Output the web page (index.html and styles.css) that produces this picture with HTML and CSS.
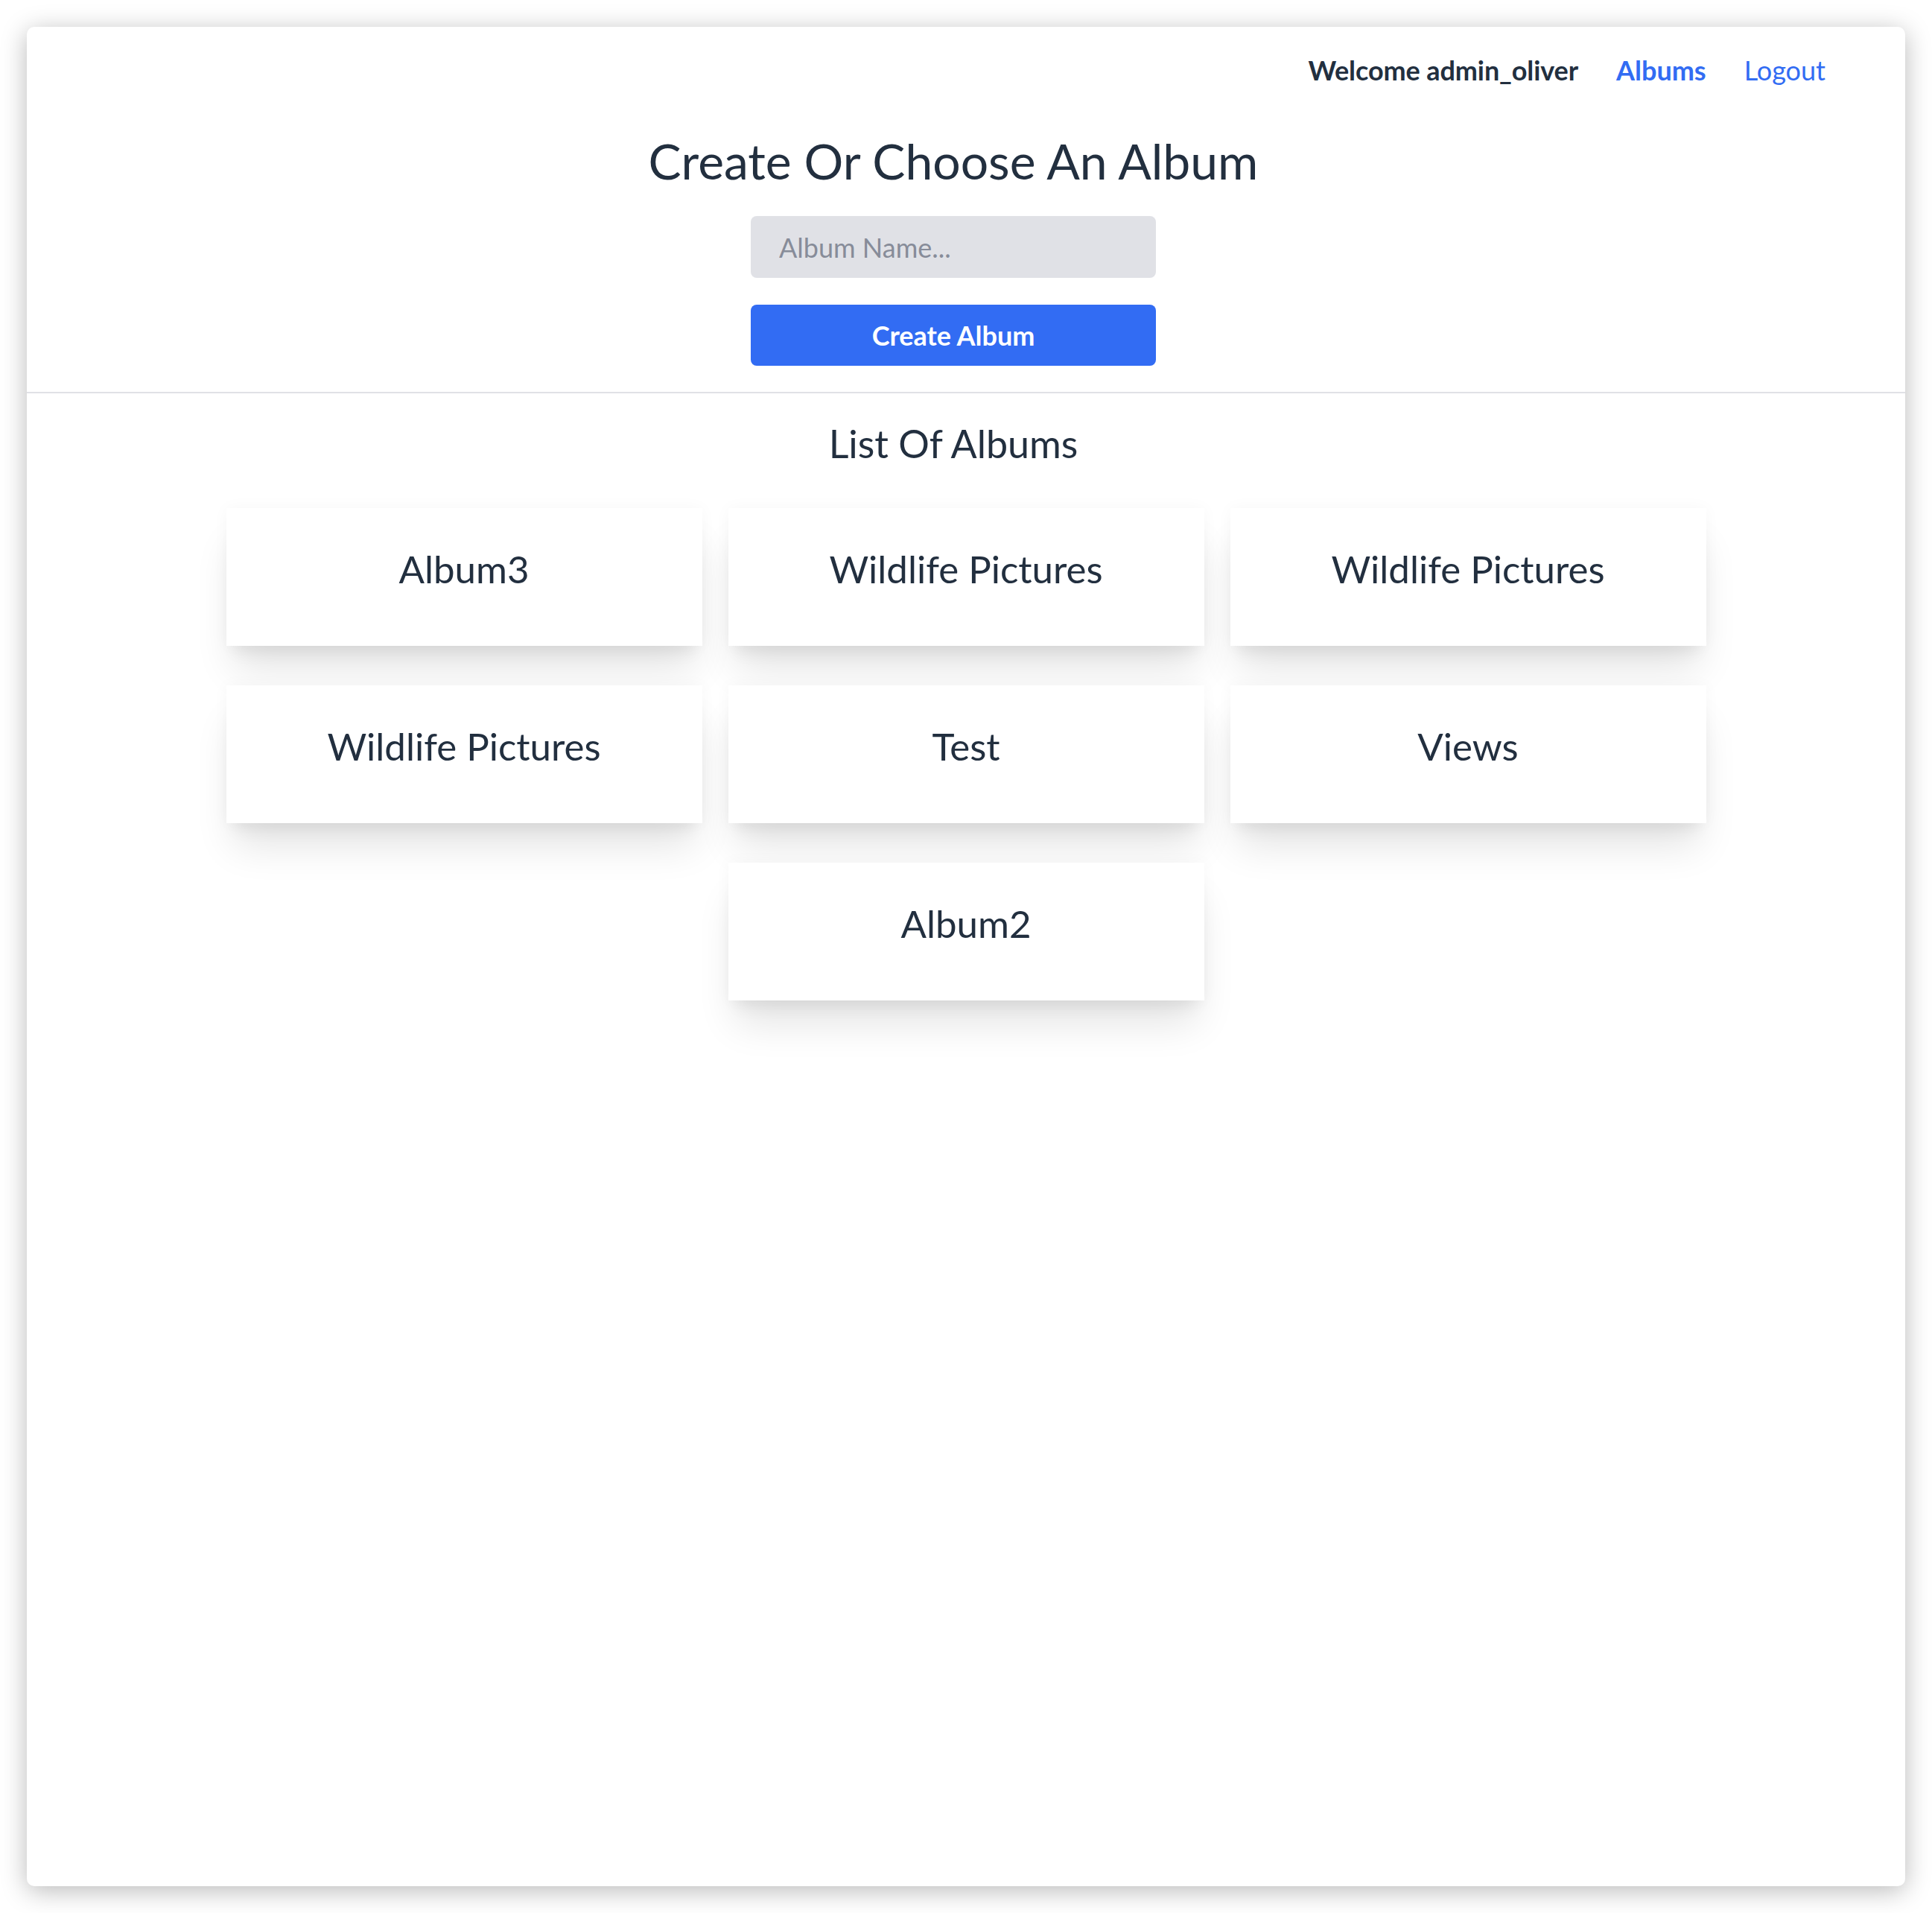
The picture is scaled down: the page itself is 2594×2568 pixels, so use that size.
FILE: index.html
```html
<!DOCTYPE html>
<html lang="en">
<head>
<meta charset="utf-8">
<title>Albums</title>
<link rel="stylesheet" href="styles.css">
</head>
<body>
<div class="window">
  <nav class="topnav">
    <span class="welcome">Welcome admin_oliver</span>
    <a class="nav-link nav-active" href="#">Albums</a>
    <a class="nav-link" href="#">Logout</a>
  </nav>
  <section class="create">
    <h1 class="create-title">Create Or Choose An Album</h1>
    <input class="album-input" type="text" placeholder="Album Name...">
    <button class="create-btn" type="button">Create Album</button>
  </section>
  <div class="divider"></div>
  <section class="albums">
    <h2 class="albums-title">List Of Albums</h2>
    <div class="album-grid">
      <div class="album-card">Album3</div>
      <div class="album-card">Wildlife Pictures</div>
      <div class="album-card">Wildlife Pictures</div>
      <div class="album-card">Wildlife Pictures</div>
      <div class="album-card">Test</div>
      <div class="album-card">Views</div>
      <div class="album-card">Album2</div>
    </div>
  </section>
</div>
</body>
</html>
```

FILE: styles.css
```css
* { box-sizing: border-box; }

html, body {
  margin: 0;
  padding: 0;
  background: #ffffff;
}

body {
  padding: 36px;
  font-family: Lato, "Open Sans", sans-serif;
  color: #222f3f;
}

.window {
  width: 2522px;
  height: 2496px;
  background: #ffffff;
  border-radius: 10px;
  box-shadow: 0 6px 34px rgba(0, 0, 0, 0.28);
  overflow: hidden;
}

.topnav {
  display: flex;
  justify-content: flex-end;
  align-items: center;
  gap: 51px;
  padding: 32px 107px 0 0;
  height: 84px;
  line-height: 50px;
  font-size: 36px;
}

.welcome {
  font-weight: 700;
  color: #222f3f;
  letter-spacing: -0.1px;
}

.nav-link {
  color: #326cf3;
  text-decoration: none;
  font-weight: 400;
}

.nav-active {
  font-weight: 700;
}

.create {
  display: flex;
  flex-direction: column;
  align-items: center;
  padding-right: 34px;
}

.create-title {
  margin: 57px 0 0 0;
  font-size: 66px;
  line-height: 78px;
  font-weight: 400;
  color: #222f3f;
}

.album-input {
  margin-top: 35px;
  width: 544px;
  height: 83px;
  border: none;
  border-radius: 8px;
  background: #e0e1e6;
  padding: 0 38px;
  font-family: Lato, "Open Sans", sans-serif;
  font-size: 36px;
  color: #222f3f;
  outline: none;
}

.album-input::placeholder {
  color: #878c99;
}

.create-btn {
  margin-top: 36px;
  width: 544px;
  height: 82px;
  border: none;
  border-radius: 8px;
  background: #326cf3;
  color: #ffffff;
  font-family: Lato, "Open Sans", sans-serif;
  font-size: 36px;
  font-weight: 700;
}

.divider {
  margin-top: 35px;
  height: 2px;
  background: #e0e1e6;
}

.albums {
  display: flex;
  flex-direction: column;
  align-items: center;
}

.albums-title {
  margin: 35px 34px 0 0;
  font-size: 52px;
  line-height: 64px;
  font-weight: 400;
  color: #222f3f;
}

.album-grid {
  margin-top: 55px;
  width: 1987px;
  display: flex;
  flex-wrap: wrap;
  justify-content: center;
  column-gap: 35px;
  row-gap: 53px;
}

.album-card {
  width: 639px;
  height: 185px;
  padding-bottom: 22px;
  display: flex;
  align-items: center;
  justify-content: center;
  background: #ffffff;
  font-size: 51px;
  color: #222f3f;
  box-shadow: 0 40px 50px -10px rgba(0, 0, 0, 0.11), 0 20px 20px -10px rgba(0, 0, 0, 0.05), 0 0 20px rgba(0, 0, 0, 0.035);
}
```
